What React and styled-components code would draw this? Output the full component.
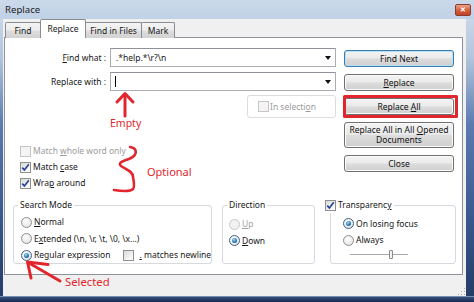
import React from "react";
import styled, { createGlobalStyle } from "styled-components";

const GlobalStyle = createGlobalStyle`
  html, body {
    margin: 0;
    padding: 0;
    background: #fff;
  }
`;

const RED = "#e2262e";

const Window = styled.div`
  position: relative;
  width: 474px;
  height: 302px;
  display: flex;
  flex-direction: column;
  overflow: hidden;
  font-family: "Noto Sans", "Open Sans", sans-serif;
  font-size: 8.5px;
  line-height: 12px;
  color: #171717;
  background: #bccde2;
`;

const TitleBar = styled.div`
  flex: none;
  height: 19px;
  display: flex;
  align-items: center;
  padding: 0 3px 0 5px;
  background: linear-gradient(#cbd9ea, #c0d1e6);
  font-size: 9.6px;
  color: #1c1c1c;
`;

const CloseBox = styled.div`
  margin-left: auto;
  width: 16px;
  height: 12px;
  box-sizing: border-box;
  border: 1px solid #8f3b2c;
  border-radius: 2px;
  background: linear-gradient(#eaa48e, #d4613f 50%, #c0412a);
  display: flex;
  align-items: center;
  justify-content: center;
  color: #fff;
  font-size: 7px;
  font-weight: bold;
  line-height: 1;
`;

const Middle = styled.div`
  flex: 1;
  display: flex;
  min-height: 0;
`;

const SideFrame = styled.div`
  flex: none;
  width: ${(p) => p.$w}px;
  background: linear-gradient(#c8d6e8 0%, #b2c5dc 14%, #5b7bb0 38%, #3a5a90 70%, #253d69 100%);
`;

const Client = styled.div`
  flex: 1;
  display: flex;
  flex-direction: column;
  background: #f0f0f0;
`;

const BottomFrame = styled.div`
  flex: none;
  height: 6px;
  border-top: 1px solid #7b8db0;
  box-sizing: border-box;
  background: linear-gradient(#34507f, #1b2b4c);
`;

const TabRow = styled.div`
  flex: none;
  height: 19px;
  display: flex;
  align-items: flex-end;
  padding-left: 2px;
`;

const Tab = styled.div`
  position: relative;
  z-index: ${(p) => (p.$active ? 2 : 1)};
  box-sizing: border-box;
  width: ${(p) => p.$w}px;
  height: ${(p) => (p.$active ? 19 : 16)}px;
  & + & {
    margin-left: -1px;
  }
  border: 1px solid #898c95;
  border-bottom: none;
  border-radius: 2px 2px 0 0;
  background: ${(p) =>
    p.$active
      ? "#fff"
      : "linear-gradient(#f4f4f4, #ececec 48%, #dedede 52%, #d2d2d2)"};
  display: flex;
  align-items: center;
  justify-content: center;
  padding-top: ${(p) => (p.$active ? 0 : 1)}px;
`;

const Panel = styled.div`
  position: relative;
  z-index: 0;
  margin: -1px 3px 0 1px;
  height: 238px;
  box-sizing: border-box;
  border: 1px solid #8e9199;
  background: #fff;
  padding-top: 10px;
  display: flex;
  flex-direction: column;
`;

const TopSection = styled.div`
  display: flex;
`;

const LeftCol = styled.div`
  width: 331px;
  display: flex;
  flex-direction: column;
`;

const FieldRow = styled.div`
  display: grid;
  grid-template-columns: 101px 226px;
  column-gap: 4px;
  align-items: center;
  height: 19px;
  & + & {
    margin-top: 5px;
  }
`;

const FieldLabel = styled.label`
  text-align: right;
`;

const ComboBox = styled.div`
  box-sizing: border-box;
  height: 19px;
  border: 1px solid #abadb3;
  border-top-color: #8f929b;
  background: #fff;
  display: flex;
  align-items: center;
  padding: 0 4px 0 ${(p) => p.$pad}px;
`;

const ComboText = styled.span`
  flex: 1;
  white-space: pre;
`;

const Caret = styled.span`
  width: 1px;
  height: 11px;
  background: #000;
`;

const DropArrow = styled.span`
  margin-left: auto;
  width: 0;
  height: 0;
  border-left: 3.5px solid transparent;
  border-right: 3.5px solid transparent;
  border-top: 4px solid #111;
`;

const InSelectionBox = styled.div`
  align-self: flex-end;
  margin-top: 4px;
  width: 89px;
  height: 23px;
  box-sizing: border-box;
  border: 1px solid #dcdcdc;
  border-radius: 3px;
  display: flex;
  align-items: center;
  gap: 1px;
  padding-left: 10px;
  color: #9b9b9b;
`;

const CheckList = styled.div`
  margin-top: 25px;
  padding-left: 15px;
  display: flex;
  flex-direction: column;
`;

const CheckRow = styled.label`
  display: flex;
  align-items: center;
  gap: 2px;
  height: 16px;
  color: ${(p) => (p.$disabled ? "#9c9c9c" : "inherit")};
`;

const Text = styled.span`
  white-space: nowrap;
`;

const Box = styled.span`
  flex: none;
  width: 11px;
  height: 11px;
  box-sizing: border-box;
  border: 1px solid ${(p) => (p.$disabled ? "#c6c6c6" : "#8e8f8f")};
  background: ${(p) =>
    p.$disabled ? "#f4f4f4" : "linear-gradient(135deg, #d8d8d8, #f6f6f6 70%, #fff)"};
  display: flex;
  align-items: center;
  justify-content: center;
`;

const RadioDot = styled.span`
  flex: none;
  width: 11px;
  height: 11px;
  box-sizing: border-box;
  border-radius: 50%;
  border: 1px solid ${(p) => (p.$disabled ? "#c8c8c8" : p.$checked ? "#3c5f86" : "#8e8f8f")};
  background: ${(p) =>
    p.$disabled ? "#f2f2f2" : "radial-gradient(circle at 40% 35%, #ffffff, #dedede)"};
  display: flex;
  align-items: center;
  justify-content: center;
  &::after {
    content: "";
    display: ${(p) => (p.$checked ? "block" : "none")};
    width: 5px;
    height: 5px;
    border-radius: 50%;
    background: radial-gradient(circle at 40% 35%, #a6dcf8, #2a78b8 55%, #16446f);
  }
`;

const ButtonCol = styled.div`
  margin-left: 8px;
  width: 110px;
  padding-top: 2px;
  display: flex;
  flex-direction: column;
  gap: 7px;
`;

const Button = styled.button`
  height: ${(p) => (p.$tall ? 26 : 17)}px;
  box-sizing: border-box;
  margin: 0;
  padding: 0 4px;
  font: inherit;
  line-height: 10px;
  color: #111;
  border: 1px solid ${(p) => (p.$default ? "#3d7bad" : "#707070")};
  border-radius: 3px;
  background: linear-gradient(#f3f3f3, #ebebeb 46%, #dddddd 52%, #cfcfcf);
  box-shadow: inset 0 0 0 1px ${(p) => (p.$default ? "#b6e2f7" : "#fbfbfb")};
  text-align: center;
`;

const GroupRow = styled.div`
  display: flex;
  margin-top: 8px;
  padding-left: 8px;
`;

const GroupBox = styled.fieldset`
  margin: 0 0 0 ${(p) => p.$ml || 0}px;
  min-width: 0;
  width: ${(p) => p.$w}px;
  height: 65px;
  box-sizing: border-box;
  border: 1px solid #d6dadf;
  border-radius: 3px;
  padding: ${(p) => p.$top}px 0 0 ${(p) => p.$pad}px;
`;

const Legend = styled.legend`
  padding: 0 2px;
  margin-left: ${(p) => p.$ml}px;
  line-height: 12px;
`;

const LegendInner = styled.span`
  display: inline-flex;
  align-items: center;
  gap: 2px;
`;

const RadioRow = styled.label`
  display: flex;
  align-items: center;
  gap: 2px;
  height: 16.5px;
  color: ${(p) => (p.$disabled ? "#a3a3a3" : "inherit")};
`;

const Spacer = styled.span`
  width: ${(p) => p.$w}px;
  flex: none;
`;

const SliderTrack = styled.div`
  position: relative;
  margin: 5px 0 0 7px;
  width: 58px;
  height: 1px;
  background: #a9a9a9;
`;

const SliderThumb = styled.div`
  position: absolute;
  left: 39px;
  top: -4px;
  width: 4px;
  height: 9px;
  box-sizing: border-box;
  border: 1px solid #8a8a8a;
  border-radius: 1px;
  background: #f2f2f2;
`;

const StatusStrip = styled.div`
  flex: 1;
  display: flex;
  justify-content: flex-end;
  align-items: flex-end;
  padding: 0 1px 1px 0;
`;

const Grip = styled.div`
  width: 8px;
  height: 8px;
  background: radial-gradient(circle, #a8a8a8 0.8px, transparent 1px) 0 0 / 3px 3px;
  clip-path: polygon(100% 0, 100% 100%, 0 100%);
`;

const U = styled.span`
  text-decoration: underline;
  text-underline-offset: 1px;
`;

const Overlay = styled.svg`
  position: absolute;
  left: 0;
  top: 0;
  pointer-events: none;
  z-index: 5;
`;

const Note = styled.span`
  position: absolute;
  z-index: 6;
  left: ${(p) => p.$x}px;
  top: ${(p) => p.$y}px;
  font-size: ${(p) => p.$size}px;
  line-height: 1;
  color: ${RED};
`;

const Check = () => (
  <svg width="9" height="9" viewBox="0 0 9 9">
    <path d="M1.3 4.6 L3.4 7 L7.8 1.3" fill="none" stroke="#233f8f" strokeWidth="1.6" />
  </svg>
);

const CheckBox = ({ checked, disabled }) => (
  <Box $disabled={disabled}>{checked && <Check />}</Box>
);

export default function App() {
  return (
    <>
      <GlobalStyle />
      <Window>
        <TitleBar>
          Replace
          <CloseBox>✕</CloseBox>
        </TitleBar>
        <Middle>
          <SideFrame $w={3} />
          <Client>
            <TabRow>
              <Tab $w={36}>Find</Tab>
              <Tab $w={46} $active>Replace</Tab>
              <Tab $w={57}>Find in Files</Tab>
              <Tab $w={34}>Mark</Tab>
            </TabRow>
            <Panel>
              <TopSection>
                <LeftCol>
                  <FieldRow>
                    <FieldLabel><U>F</U>ind what :</FieldLabel>
                    <ComboBox $pad={5}>
                      <ComboText>.*help.*\r?\n</ComboText>
                      <DropArrow />
                    </ComboBox>
                  </FieldRow>
                  <FieldRow>
                    <FieldLabel>Replace with :</FieldLabel>
                    <ComboBox $pad={4}>
                      <Caret />
                      <DropArrow />
                    </ComboBox>
                  </FieldRow>
                  <InSelectionBox>
                    <CheckBox disabled />
                    <Text>In selecti<U>o</U>n</Text>
                  </InSelectionBox>
                  <CheckList>
                    <CheckRow $disabled>
                      <CheckBox disabled />
                      <Text>Match <U>w</U>hole word only</Text>
                    </CheckRow>
                    <CheckRow>
                      <CheckBox checked />
                      <Text>Match <U>c</U>ase</Text>
                    </CheckRow>
                    <CheckRow>
                      <CheckBox checked />
                      <Text>Wra<U>p</U> around</Text>
                    </CheckRow>
                  </CheckList>
                </LeftCol>
                <ButtonCol>
                  <Button $default>Find Next</Button>
                  <Button><U>R</U>eplace</Button>
                  <Button>Replace <U>A</U>ll</Button>
                  <Button $tall>
                    Replace All in All <U>O</U>pened
                    <br />
                    Documents
                  </Button>
                  <Button>Close</Button>
                </ButtonCol>
              </TopSection>
              <GroupRow>
                <GroupBox $w={199} $pad={7} $top={3}>
                  <Legend $ml={-3}>Search Mode</Legend>
                  <RadioRow>
                    <RadioDot />
                    <Text><U>N</U>ormal</Text>
                  </RadioRow>
                  <RadioRow>
                    <RadioDot />
                    <Text>E<U>x</U>tended (\n, \r, \t, \0, \x...)</Text>
                  </RadioRow>
                  <RadioRow>
                    <RadioDot $checked />
                    <Text>Re<U>g</U>ular expression</Text>
                    <Spacer $w={9} />
                    <CheckBox />
                    <Spacer $w={1} />
                    <Text><U>.</U> matches newline</Text>
                  </RadioRow>
                </GroupBox>
                <GroupBox $w={93} $ml={10} $pad={6} $top={5}>
                  <Legend $ml={-2}>Direction</Legend>
                  <RadioRow $disabled>
                    <RadioDot $disabled />
                    <Text><U>U</U>p</Text>
                  </RadioRow>
                  <RadioRow>
                    <RadioDot $checked />
                    <Text><U>D</U>own</Text>
                  </RadioRow>
                </GroupBox>
                <GroupBox $w={126} $ml={15} $pad={12} $top={3}>
                  <Legend $ml={-20}>
                    <LegendInner>
                      <CheckBox checked />
                      <Text>Transparenc<U>y</U></Text>
                    </LegendInner>
                  </Legend>
                  <RadioRow>
                    <RadioDot $checked />
                    <Text>On losing focus</Text>
                  </RadioRow>
                  <RadioRow>
                    <RadioDot />
                    <Text>Always</Text>
                  </RadioRow>
                  <SliderTrack>
                    <SliderThumb />
                  </SliderTrack>
                </GroupBox>
              </GroupRow>
            </Panel>
            <StatusStrip>
              <Grip />
            </StatusStrip>
          </Client>
          <SideFrame $w={8} />
        </Middle>
        <BottomFrame />

        <Overlay width="474" height="302" viewBox="0 0 474 302">
          <g fill="none" stroke={RED} strokeWidth="3" strokeLinecap="round" strokeLinejoin="round">
            <path d="M125 116 L125 95" />
            <path d="M117 102 L125 93.5 L133 102" />
            <rect x="344.5" y="96.5" width="112" height="20" strokeLinecap="butt" />
            <path d="M130 147 C138 148 137 155 131 158 C125 161 117 162 121 166 C125 169 133 171 133 177 C134 182 135 187 133 189 C130 192 121 191 114 190" strokeWidth="2.6" />
            <path d="M60 281 L29 263" />
            <path d="M48 264.5 L27.5 262 L31 278" />
          </g>
        </Overlay>
        <Note $x={110} $y={117.5} $size={10.5}>Empty</Note>
        <Note $x={147} $y={165.5} $size={11}>Optional</Note>
        <Note $x={65} $y={275.5} $size={11.3}>Selected</Note>
      </Window>
    </>
  );
}
